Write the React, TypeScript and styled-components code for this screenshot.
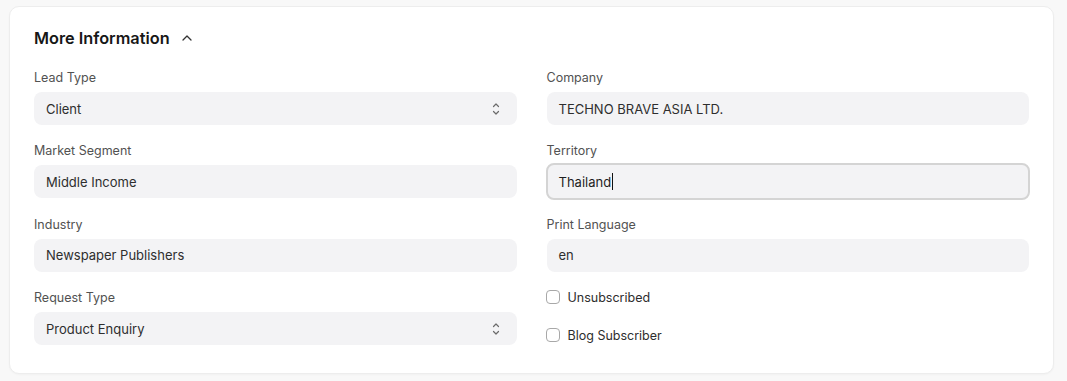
import React from "react";
import styled, { createGlobalStyle } from "styled-components";

const Global = createGlobalStyle`
  html, body { margin: 0; padding: 0; background: #f8f8f8; }
  body { font-family: Inter, "Noto Sans", sans-serif; color: #171717; }
  * { box-sizing: border-box; }
`;

const Page = styled.div`
  padding: 6px 13px 8px 9px;
`;

const Card = styled.section`
  background: #fff;
  border: 1px solid #ededed;
  border-radius: 10px;
  padding: 19px 24px 28px 24px;
  box-shadow: 0 1px 2px rgba(0,0,0,0.03);
`;

const Header = styled.div`
  display: flex;
  align-items: center;
  gap: 10px;
  height: 24px;
  margin-bottom: 20px;
`;

const Title = styled.h3`
  margin: 0;
  font-size: 16.3px;
  font-weight: 600;
  color: #171717;
`;

const Grid = styled.div`
  display: grid;
  grid-template-columns: 1fr 1fr;
  column-gap: 30px;
`;

const Column = styled.div`
  display: flex;
  flex-direction: column;
  gap: 18.35px;
`;

const Field = styled.div`
  display: flex;
  flex-direction: column;
  gap: 6px;
`;

const Label = styled.label`
  font-size: 12.5px;
  line-height: 16px;
  color: #525252;
`;

const Input = styled.div<{ $focused?: boolean }>`
  position: relative;
  height: 33px;
  display: flex;
  align-items: center;
  padding: 0 12px;
  background: #f3f3f5;
  border-radius: 8px;
  font-size: 13px;
  color: #2e2e2e;
  ${(p) =>
    p.$focused &&
    `
    margin: -2px -1px;
    height: 37px;
    border: 2px solid #d4d4d4;
    padding: 0 11px;
    color: #1f1f1f;
  `}
`;

const Caret = styled.span`
  display: inline-block;
  width: 1px;
  height: 17px;
  background: #111;
  margin-left: 1px;
`;

const SelectIcon = styled.svg`
  position: absolute;
  right: 16px;
  top: 50%;
  transform: translateY(-50%);
`;

const CheckList = styled.div`
  display: flex;
  flex-direction: column;
  gap: 24px;
`;

const CheckRow = styled.label`
  display: flex;
  align-items: center;
  gap: 8px;
  font-size: 12.5px;
  color: #2e2e2e;
  height: 14px;
`;

const Box = styled.span`
  width: 14px;
  height: 14px;
  margin-left: -1px;
  border: 1px solid #a8a8a8;
  border-radius: 4px;
  background: #fff;
`;

const Chevrons = () => (
  <SelectIcon width="10" height="14" viewBox="0 0 10 14" fill="none" stroke="#6b6b6b" strokeWidth="1.2" strokeLinecap="round" strokeLinejoin="round">
    <path d="M2.5 4.5 L5 2 L7.5 4.5" />
    <path d="M2.5 9.5 L5 12 L7.5 9.5" />
  </SelectIcon>
);

export default function App() {
  return (
    <>
      <Global />
      <Page>
        <Card>
          <Header>
            <Title>More Information</Title>
            <svg width="14" height="14" viewBox="0 0 14 14" fill="none" stroke="#333" strokeWidth="1.3" strokeLinecap="round" strokeLinejoin="round">
              <path d="M3 9 L7 5 L11 9" />
            </svg>
          </Header>
          <Grid>
            <Column>
              <Field>
                <Label>Lead Type</Label>
                <Input>Client<Chevrons /></Input>
              </Field>
              <Field>
                <Label>Market Segment</Label>
                <Input>Middle Income</Input>
              </Field>
              <Field>
                <Label>Industry</Label>
                <Input>Newspaper Publishers</Input>
              </Field>
              <Field>
                <Label>Request Type</Label>
                <Input>Product Enquiry<Chevrons /></Input>
              </Field>
            </Column>
            <Column>
              <Field>
                <Label>Company</Label>
                <Input>TECHNO BRAVE ASIA LTD.</Input>
              </Field>
              <Field>
                <Label>Territory</Label>
                <Input $focused>Thailand<Caret /></Input>
              </Field>
              <Field>
                <Label>Print Language</Label>
                <Input>en</Input>
              </Field>
              <CheckList>
                <CheckRow><Box />Unsubscribed</CheckRow>
                <CheckRow><Box />Blog Subscriber</CheckRow>
              </CheckList>
            </Column>
          </Grid>
        </Card>
      </Page>
    </>
  );
}
